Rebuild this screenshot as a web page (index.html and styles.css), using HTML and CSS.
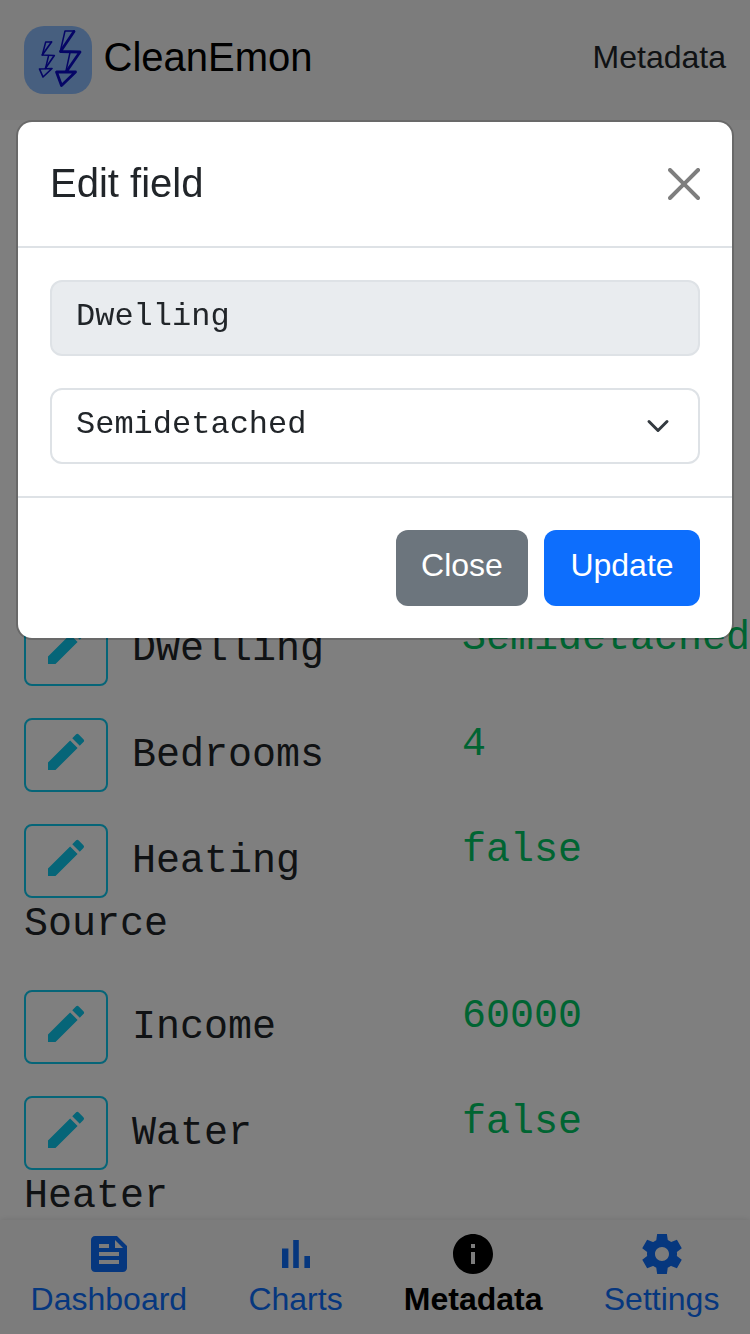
FILE: index.html
```html
<!DOCTYPE html>
<html lang="en">
<head>
<meta charset="utf-8">
<title>CleanEmon</title>
<link rel="stylesheet" href="styles.css">
</head>
<body>
<svg class="sprite" aria-hidden="true">
  <symbol id="edit" viewBox="0 0 24 24"><path d="M3 17.25V21h3.75L17.81 9.94l-3.75-3.75L3 17.25zM20.71 7.04a.996.996 0 0 0 0-1.41l-2.34-2.34a.996.996 0 0 0-1.41 0l-1.83 1.83 3.75 3.75 1.83-1.83z"/></symbol>
</svg>
<div class="app">
  <header class="topbar">
    <a class="brand">
      <svg class="logo" viewBox="0 0 68 68">
        <rect width="68" height="68" rx="20" fill="#8fbfff"/>
        <g fill="none" stroke="#0a0acc" stroke-linejoin="round" stroke-linecap="round">
          <path stroke-width="1.500" d="M50 5H41L36.300 25.500M46 26.500L42 45M21.700 16H27.500M21.700 16L18.300 29M24.500 30L21.500 42.500"/>
          <path stroke-width="2.800" d="M50 5.500L36.500 25.500L56 26L42.500 45.500M32.500 46H51.500L37.500 59.500Z"/>
          <path stroke-width="1.700" d="M27.500 16L18.300 29L30.300 29.500L21.300 42.500M15.500 43L28 42.500L19 51Z"/>
        </g>
      </svg>
      <span class="brand-name">CleanEmon</span>
    </a>
    <span class="page-name">Metadata</span>
  </header>
  <main class="fields">
    <div class="field"><div class="label"><button class="edit"><svg><use href="#edit"/></svg></button> Dwelling</div><div class="value">Semidetached</div></div>
    <div class="field"><div class="label"><button class="edit"><svg><use href="#edit"/></svg></button> Bedrooms</div><div class="value">4</div></div>
    <div class="field two-line"><div class="label"><button class="edit"><svg><use href="#edit"/></svg></button> Heating Source</div><div class="value">false</div></div>
    <div class="field"><div class="label"><button class="edit"><svg><use href="#edit"/></svg></button> Income</div><div class="value">60000</div></div>
    <div class="field two-line"><div class="label"><button class="edit"><svg><use href="#edit"/></svg></button> Water Heater</div><div class="value">false</div></div>
  </main>
  <nav class="tabs">
    <a class="tab"><svg viewBox="0 0 24 24"><path d="M16 3H5c-1.100 0-2 .9-2 2v14c0 1.100.9 2 2 2h14c1.100 0 2-.9 2-2V8l-5-5zM7 7h5v2H7V7zm10 10H7v-2h10v2zm0-4H7v-2h10v2zm-2-4V5l4 4h-4z"/></svg><span>Dashboard</span></a>
    <a class="tab"><svg viewBox="0 0 24 24"><path d="M5 9.200h3.200V19H5zM10.600 5h2.800v14h-2.800zm5.600 8H19v6h-2.800z"/></svg><span>Charts</span></a>
    <a class="tab active"><svg viewBox="0 0 24 24"><path d="M12 2C6.480 2 2 6.480 2 12s4.480 10 10 10 10-4.480 10-10S17.520 2 12 2zm1 15h-2v-6h2v6zm0-8h-2V7h2v2z"/></svg><span>Metadata</span></a>
    <a class="tab"><svg viewBox="0 0 24 24"><path d="M19.440 12.990l-.01.02c.04-.33.08-.67.08-1.010 0-.34-.03-.66-.07-.99l.01.02 2.440-1.920-2.430-4.220-2.870 1.160.01.01c-.52-.4-1.090-.74-1.710-1h.01L14.440 2H9.570l-.44 3.070h.01c-.62.26-1.190.6-1.710 1l.01-.01-2.880-1.170-2.440 4.220 2.440 1.920.01-.02c-.04.33-.07.65-.07.99 0 .34.03.68.08 1.010l-.01-.02-2.100 1.650-.33.26 2.430 4.200 2.880-1.150-.02-.04c.53.41 1.100.75 1.730 1.010h-.03L9.580 22h4.850l.44-3.070h-.01c.62-.26 1.200-.6 1.730-1.010l-.02.04 2.880 1.150 2.430-4.200-2.440-1.920zM12 15.500c-1.930 0-3.500-1.570-3.500-3.500s1.570-3.500 3.500-3.500 3.500 1.570 3.500 3.500-1.570 3.500-3.500 3.500z"/></svg><span>Settings</span></a>
  </nav>
</div>
<div class="backdrop">
  <section class="modal" role="dialog">
    <header class="modal-head">
      <h1>Edit field</h1>
      <svg class="dismiss" viewBox="0 0 16 16"><path d="M.293.293a1 1 0 0 1 1.414 0L8 6.586 14.293.293a1 1 0 1 1 1.414 1.414L9.414 8l6.293 6.293a1 1 0 0 1-1.414 1.414L8 9.414l-6.293 6.293a1 1 0 0 1-1.414-1.414L6.586 8 .293 1.707a1 1 0 0 1 0-1.414z"/></svg>
    </header>
    <div class="modal-body">
      <div class="control disabled">Dwelling</div>
      <div class="control">Semidetached<svg class="chevron" viewBox="0 0 16 16"><path d="m2 5 6 6 6-6"/></svg></div>
    </div>
    <footer class="modal-foot">
      <button class="btn close">Close</button>
      <button class="btn update">Update</button>
    </footer>
  </section>
</div>
</body>
</html>
```
FILE: styles.css
```css
* { box-sizing: border-box; }
body { margin: 0; font: 32px/48px "Liberation Sans", Arial, sans-serif; color: #212529; background: #fff; }
button { font: inherit; }
.sprite { display: none; }
.app { height: 1334px; overflow: hidden; display: flex; flex-direction: column; }

.topbar { flex: none; height: 120px; padding: 0 24px; background: #f8f8f8; display: flex; justify-content: space-between; align-items: center; }
.brand { display: flex; align-items: center; gap: 11.5px; color: #000; font-size: 40px; line-height: 60px; }
.logo { display: block; width: 68px; height: 68px; }
.brand-name { padding-bottom: 7px; }
.page-name { padding-bottom: 6px; }

.fields { flex: 1; min-height: 0; overflow: hidden; padding: 476px 24px 0; font: 40px/54px "Liberation Mono", monospace; }
.field { display: grid; grid-template-columns: 388px 1fr; column-gap: 50px; padding: 16px 0; }
.two-line { padding-bottom: 22px; }
.edit { display: inline-block; width: 84px; height: 74px; padding: 8px 16px 14px; vertical-align: -10px; border: 2px solid #0dcaf0; border-radius: 8px; background: none; color: #0dcaf0; }
.edit svg { display: block; width: 48px; height: 48px; fill: currentColor; }
.value { color: #00c864; white-space: nowrap; }

.tabs { flex: none; position: relative; height: 114px; padding-top: 10px; background: #f8f8f8; box-shadow: 0 0 6px rgba(0, 0, 0, .12); display: flex; justify-content: space-around; }
.tab { display: flex; flex-direction: column; align-items: center; color: #0d6efd; line-height: 42px; }
.tab svg { display: block; width: 48px; height: 48px; fill: currentColor; }
.tab.active { color: #000; font-weight: bold; }

.backdrop { position: fixed; inset: 0; padding: 120px 16px 0; background: rgba(0, 0, 0, .5); }
.modal { border: 2px solid rgba(0, 0, 0, .175); border-radius: 16px; background: #fff; background-clip: padding-box; }
.modal-head { display: flex; justify-content: space-between; align-items: center; padding: 32px; border-bottom: 2px solid #dee2e6; }
.modal-head h1 { margin: 0; padding-bottom: 2px; font-size: 40px; line-height: 58px; font-weight: normal; }
.dismiss { width: 32px; height: 32px; opacity: .5; }
.modal-body { display: flex; flex-direction: column; gap: 32px; padding: 32px; }
.control { height: 76px; padding: 11px 24px 13px; border: 2px solid #dee2e6; border-radius: 12px; font-family: "Liberation Mono", monospace; display: flex; justify-content: space-between; }
.control.disabled { background: #e9ecef; }
.chevron { width: 32px; height: 24px; margin-top: 13px; fill: none; stroke: #343a40; stroke-width: 2; stroke-linecap: round; stroke-linejoin: round; }
.modal-foot { display: flex; justify-content: flex-end; gap: 16px; padding: 32px; border-top: 2px solid #dee2e6; }
.btn { height: 76px; padding: 0 0 6px; border: 0; border-radius: 12px; color: #fff; }
.close { width: 132px; background: #6c757d; }
.update { width: 156px; background: #0d6efd; }
```
